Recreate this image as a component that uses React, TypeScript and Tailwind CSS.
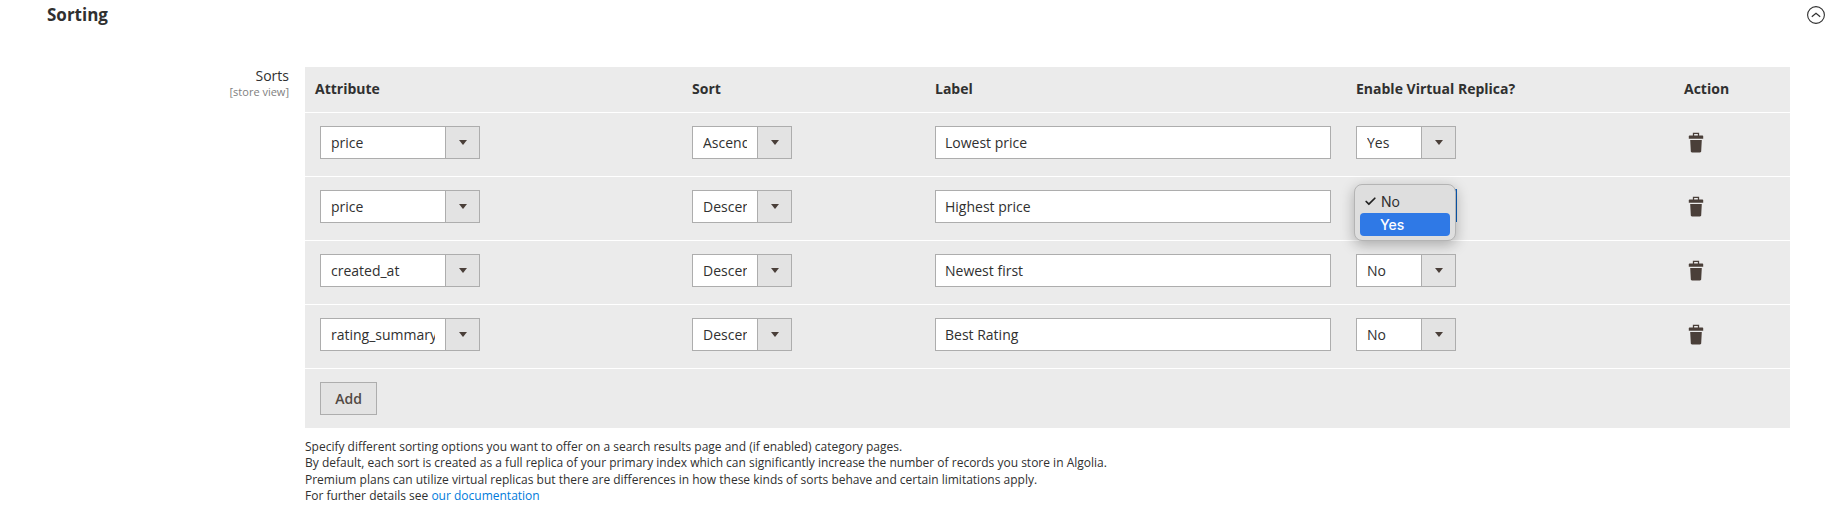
import { Check } from "lucide-react"

const rows = [
  { attribute: "price", sort: "Ascending", label: "Lowest price", replica: "Yes", open: false },
  { attribute: "price", sort: "Descending", label: "Highest price", replica: "No", open: true },
  { attribute: "created_at", sort: "Descending", label: "Newest first", replica: "No", open: false },
  { attribute: "rating_summary", sort: "Descending", label: "Best Rating", replica: "No", open: false },
]

function TrashIcon() {
  return (
    <svg width="16" height="21" viewBox="0 0 16 21" fill="none">
      <path d="M5.500 4V1.400h5V4" stroke="#4a3f39" strokeWidth="1.300" />
      <path d="M0.800 6.800V4.600c0-.6.4-1 1-1h12.400c.6 0 1 .4 1 1v2.200z" fill="#4a3f39" />
      <path d="M2.200 8h11.600l-.6 11.200c0 .7-.5 1.200-1.200 1.200H4c-.7 0-1.200-.5-1.200-1.200z" fill="#4a3f39" />
    </svg>
  )
}

function SelectBox({ value, width, focused }: { value: string; width: string; focused?: boolean }) {
  return (
    <div className={`flex h-[33px] border border-[#adadad] bg-white ${width}`}>
      <div className="flex-1 min-w-0 mx-[10px] overflow-hidden whitespace-nowrap text-[14px] leading-[31px] text-[#303030]">
        {value}
      </div>
      <div className="w-[34px] shrink-0 flex items-center justify-center border-l border-[#adadad] bg-[#e3e3e3]">
        <div className="w-0 h-0 border-l-[4px] border-r-[4px] border-t-[5px] border-l-transparent border-r-transparent border-t-[#4a3f39]" />
      </div>
      {focused && <div className="absolute -right-px -top-px w-[2px] h-[33px] bg-[#0a5cb8]" />}
    </div>
  )
}

function ReplicaMenu() {
  return (
    <div className="absolute -left-[2px] -top-[6px] w-[102px] h-[57px] px-[5px] pt-[6px] rounded-[8px] border border-[#b4b4b4] bg-[#dedede] shadow-[0_4px_14px_rgba(0,0,0,0.28)] font-['Inter',sans-serif] text-[14px]">
      <div className="flex items-center h-[22px] text-[#303030]">
        <Check size={13} strokeWidth={3.2} className="ml-[4px] mr-[4px] text-[#222]" />
        <span>No</span>
      </div>
      <div className="flex items-center h-[23px] pl-[20px] rounded-[4px] bg-[#2f79e6] text-white font-medium">Yes</div>
    </div>
  )
}

export default function App() {
  return (
    <div className="w-[1846px] h-[519px] bg-white overflow-hidden font-['Open_Sans',sans-serif] text-[#303030]">
      <div className="flex items-center justify-between h-[30px] pl-[47px] pr-[21px]">
        <h2 className="text-[17px] font-bold">Sorting</h2>
        <svg width="18" height="18" viewBox="0 0 18 18" fill="none" stroke="#303030">
          <circle cx="9" cy="9" r="8.400" strokeWidth="1.100" />
          <path d="M4.800 10.800 9 7.200l4.200 3.600" strokeWidth="1.200" />
        </svg>
      </div>

      <div className="flex mt-[37px]">
        <div className="w-[305px] shrink-0 pr-[16px] text-right">
          <div className="text-[14px] leading-[18px]">Sorts</div>
          <div className="text-[11px] leading-[14px] text-[#808080]">[store view]</div>
        </div>

        <div className="w-[1485px]">
          <table className="w-full table-fixed bg-[#ebebeb] border-collapse">
            <colgroup>
              <col className="w-[377px]" />
              <col className="w-[243px]" />
              <col className="w-[421px]" />
              <col className="w-[328px]" />
              <col className="w-[116px]" />
            </colgroup>
            <thead>
              <tr className="h-[45px] text-left text-[14px]">
                <th className="pl-[10px] pb-[2px] font-bold">Attribute</th>
                <th className="pl-[10px] pb-[2px] font-bold">Sort</th>
                <th className="pl-[10px] pb-[2px] font-bold">Label</th>
                <th className="pl-[10px] pb-[2px] font-bold">Enable Virtual Replica?</th>
                <th className="pl-[10px] pb-[2px] font-bold">Action</th>
              </tr>
            </thead>
            <tbody>
              {rows.map((row, index) => (
                <tr key={index} className="h-[64px] border-t border-white">
                  <td className="pl-[15px] pt-[13px] align-top">
                    <SelectBox value={row.attribute} width="w-[160px]" />
                  </td>
                  <td className="pl-[10px] pt-[13px] align-top">
                    <SelectBox value={row.sort} width="w-[100px]" />
                  </td>
                  <td className="pl-[10px] pt-[13px] align-top">
                    <div className="w-[396px] h-[33px] pl-[9px] pr-[10px] border border-[#adadad] bg-white text-[14px] leading-[31px]">
                      {row.label}
                    </div>
                  </td>
                  <td className="pl-[10px] pt-[13px] align-top">
                    <div className="relative w-[100px]">
                      {/* open select's value sits under the menu */}
                      <SelectBox value={row.open ? "" : row.replica} width="w-[100px]" focused={row.open} />
                      {row.open && <ReplicaMenu />}
                    </div>
                  </td>
                  <td className="pl-[14px] pt-[19px] align-top">
                    <TrashIcon />
                  </td>
                </tr>
              ))}
              <tr className="h-[60px] border-t border-white">
                <td colSpan={5} className="pl-[15px] pt-[13px] align-top">
                  <button className="h-[33px] w-[57px] border border-[#adadad] bg-[#e3e3e3] text-[14px] font-semibold text-[#514943]">
                    Add
                  </button>
                </td>
              </tr>
            </tbody>
          </table>

          <div className="mt-[11px] text-[12px] leading-[16.300px]">
            <p>Specify different sorting options you want to offer on a search results page and (if enabled) category pages.</p>
            <p>By default, each sort is created as a full replica of your primary index which can significantly increase the number of records you store in Algolia.</p>
            <p>Premium plans can utilize virtual replicas but there are differences in how these kinds of sorts behave and certain limitations apply.</p>
            <p>
              For further details see <a className="text-[#007bdb]">our documentation</a>
            </p>
          </div>
        </div>
      </div>
    </div>
  )
}
